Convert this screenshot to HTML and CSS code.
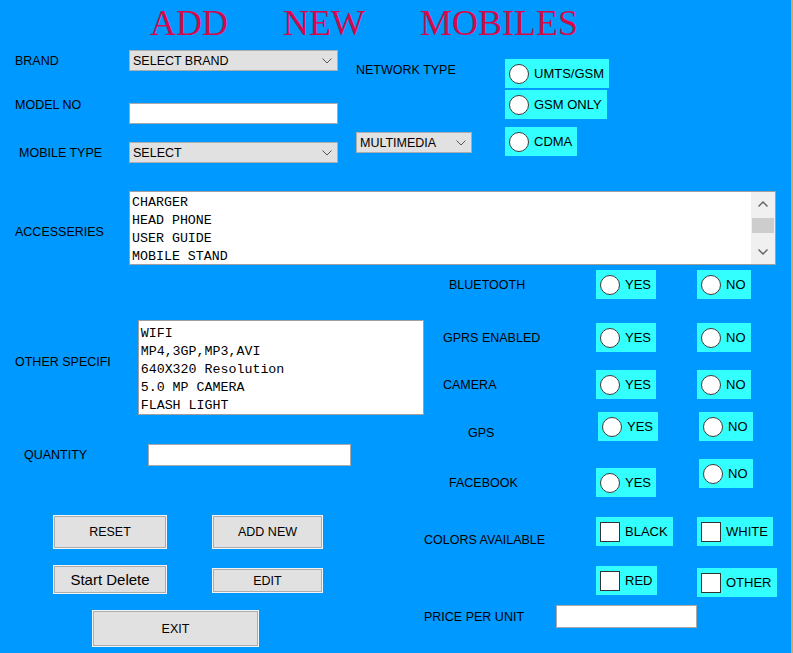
FILE: index.html
```html
<!DOCTYPE html>
<html lang="en">
<head>
  <meta charset="UTF-8" />
  <meta name="viewport" content="width=device-width, initial-scale=1.0" />
  <title>Add New Mobiles</title>
  <link rel="stylesheet" href="styles.css">
</head>
<body>

  <div class="form">
    <h1 class="title"><span>ADD</span><span>NEW</span><span>MOBILES</span></h1>

    <div class="top">
      <div class="fields">
        <div class="row">
          <span class="lbl">BRAND</span>
          <div class="combo combo-wide">SELECT BRAND
            <svg class="chev" width="10" height="6" viewBox="0 0 10 6"><polyline points="0.5,0.5 5,5 9.5,0.5" /></svg>
          </div>
        </div>
        <div class="row row-model">
          <span class="lbl">MODEL NO</span>
          <div class="textbox model-box"></div>
        </div>
        <div class="row row-type">
          <span class="lbl">MOBILE TYPE</span>
          <div class="combo combo-wide">SELECT
            <svg class="chev" width="10" height="6" viewBox="0 0 10 6"><polyline points="0.5,0.5 5,5 9.5,0.5" /></svg>
          </div>
        </div>
      </div>

      <div class="network">
        <span class="lbl net-lbl">NETWORK TYPE</span>
        <div class="combo combo-small">MULTIMEDIA
          <svg class="chev" width="10" height="6" viewBox="0 0 10 6"><polyline points="0.5,0.5 5,5 9.5,0.5" /></svg>
        </div>
      </div>

      <div class="nettypes">
        <label class="opt net-1"><span class="radio"></span>UMTS/GSM</label>
        <label class="opt net-2"><span class="radio"></span>GSM ONLY</label>
        <label class="opt net-3"><span class="radio"></span>CDMA</label>
      </div>
    </div>

    <div class="acc">
      <span class="lbl acc-lbl">ACCESSERIES</span>
      <div class="listbox">
        <div class="items">
          <div>CHARGER</div>
          <div>HEAD PHONE</div>
          <div>USER GUIDE</div>
          <div>MOBILE STAND</div>
        </div>
        <div class="scroll">
          <div class="sb-arrow">
            <svg width="10" height="6" viewBox="0 0 10 6"><polyline points="0.5,5.5 5,1 9.5,5.5" /></svg>
          </div>
          <div class="sb-thumb"></div>
          <div class="sb-space"></div>
          <div class="sb-arrow">
            <svg width="10" height="6" viewBox="0 0 10 6"><polyline points="0.5,0.5 5,5 9.5,0.5" /></svg>
          </div>
        </div>
      </div>
    </div>

    <div class="lower">
      <div class="left">
        <div class="spec-row">
          <span class="lbl spec-lbl">OTHER SPECIFI</span>
          <div class="specs">
            <div>WIFI</div>
            <div>MP4,3GP,MP3,AVI</div>
            <div>640X320 Resolution</div>
            <div>5.0 MP CAMERA</div>
            <div>FLASH LIGHT</div>
          </div>
        </div>

        <div class="qty-row">
          <span class="lbl qty-lbl">QUANTITY</span>
          <div class="textbox qty-box"></div>
        </div>

        <div class="btn-row btn-row-1">
          <button class="btn btn-reset">RESET</button>
          <button class="btn btn-add">ADD NEW</button>
        </div>
        <div class="btn-row btn-row-2">
          <button class="btn btn-delete">Start Delete</button>
          <button class="btn btn-edit">EDIT</button>
        </div>
        <div class="btn-row btn-row-3">
          <button class="btn btn-exit">EXIT</button>
        </div>
      </div>

      <div class="right">
        <div class="yn yn-bluetooth">
          <span class="lbl">BLUETOOTH</span>
          <label class="opt"><span class="radio"></span>YES</label>
          <label class="opt"><span class="radio"></span>NO</label>
        </div>
        <div class="yn yn-gprs">
          <span class="lbl">GPRS ENABLED</span>
          <label class="opt"><span class="radio"></span>YES</label>
          <label class="opt"><span class="radio"></span>NO</label>
        </div>
        <div class="yn yn-camera">
          <span class="lbl">CAMERA</span>
          <label class="opt"><span class="radio"></span>YES</label>
          <label class="opt"><span class="radio"></span>NO</label>
        </div>
        <div class="yn yn-gps">
          <span class="lbl">GPS</span>
          <label class="opt"><span class="radio"></span>YES</label>
          <label class="opt"><span class="radio"></span>NO</label>
        </div>
        <div class="yn yn-facebook">
          <span class="lbl">FACEBOOK</span>
          <label class="opt fb-yes"><span class="radio"></span>YES</label>
          <label class="opt fb-no"><span class="radio"></span>NO</label>
        </div>

        <div class="yn colors-1">
          <span class="lbl">COLORS AVAILABLE</span>
          <label class="opt"><span class="check"></span>BLACK</label>
          <label class="opt"><span class="check"></span>WHITE</label>
        </div>
        <div class="yn colors-2">
          <span></span>
          <label class="opt"><span class="check"></span>RED</label>
          <label class="opt opt-other"><span class="check"></span>OTHER</label>
        </div>

        <div class="price-row">
          <span class="lbl">PRICE PER UNIT</span>
          <div class="textbox price-box"></div>
        </div>
      </div>
    </div>
  </div>

</body>
</html>
```

FILE: styles.css
```css
body {
  margin: 0;
  font-family: "Liberation Sans", Arial, sans-serif;
  font-size: 12.5px;
  color: #000;
}
.form {
  width: 791px;
  height: 653px;
  background: #0099ff;
  border-right: 2px solid #eba046;
  overflow: hidden;
}
.title {
  display: flex;
  gap: 55px;
  height: 50px;
  box-sizing: border-box;
  margin: 0;
  padding: 3px 0 0 150px;
  font-family: "Liberation Serif", "Times New Roman", serif;
  font-size: 36px;
  font-weight: normal;
  line-height: 40px;
  color: #d6084c;
}
.lbl {
  line-height: 16px;
  white-space: nowrap;
}

/* top block */
.top {
  display: flex;
  height: 113px;
}
.fields {
  width: 338px;
}
.row {
  display: flex;
  align-items: center;
}
.fields .lbl {
  width: 129px;
  padding-left: 15px;
  box-sizing: border-box;
}
.row-model {
  margin-top: 26px;
  align-items: flex-start;
}
.model-box {
  margin-top: 6px;
}
.row-type {
  margin-top: 18px;
}
.fields .row-type .lbl {
  padding-left: 19px;
}
.combo {
  display: flex;
  align-items: center;
  justify-content: space-between;
  height: 21px;
  box-sizing: border-box;
  padding: 0 5px 0 3px;
  background: #e1e1e1;
  border: 1px solid #adadad;
  white-space: nowrap;
}
.combo-wide {
  width: 209px;
}
.combo-small {
  width: 116px;
  margin-top: 54px;
}
.chev polyline,
.sb-arrow polyline {
  fill: none;
  stroke: #555;
  stroke-width: 1;
}
.textbox {
  height: 21px;
  box-sizing: border-box;
  background: #fff;
  border: 1px solid #a9a9a9;
}
.model-box {
  width: 209px;
}
.network {
  margin-left: 18px;
  width: 116px;
}
.net-lbl {
  display: block;
  margin-top: 12px;
}
.nettypes {
  margin-left: 33px;
}
.net-1 {
  margin-top: 9px;
}
.net-2 {
  margin-top: 2px;
}
.net-3 {
  margin-top: 8px;
}

/* option boxes */
.opt {
  display: flex;
  align-items: center;
  gap: 5px;
  width: fit-content;
  height: 29px;
  box-sizing: border-box;
  padding: 0 5px 0 4px;
  background: #33ffff;
  font-size: 13px;
  white-space: nowrap;
}
.radio {
  width: 20px;
  height: 20px;
  box-sizing: border-box;
  border: 1px solid #3c3c3c;
  border-radius: 50%;
  background: #fff;
}
.check {
  width: 20px;
  height: 20px;
  box-sizing: border-box;
  border: 1px solid #333;
  background: #fff;
}

/* accessories */
.acc {
  display: flex;
  align-items: flex-start;
  margin-top: 28px;
}
.acc-lbl {
  width: 129px;
  padding-left: 15px;
  box-sizing: border-box;
  margin-top: 33px;
}
.listbox {
  display: flex;
  width: 647px;
  height: 74px;
  box-sizing: border-box;
  background: #fff;
  border: 1px solid #a0a0a0;
}
.items,
.specs {
  font-family: "Liberation Mono", "Courier New", monospace;
  font-size: 13.3px;
  line-height: 18px;
  white-space: nowrap;
}
.items {
  flex: 1;
  padding: 2px 0 0 2px;
  overflow: hidden;
}
.scroll {
  display: flex;
  flex-direction: column;
  width: 24px;
  background: #f0f0f0;
}
.sb-arrow {
  display: flex;
  align-items: center;
  justify-content: center;
  height: 24px;
}
.sb-arrow polyline {
  stroke: #606060;
  stroke-width: 1.4;
}
.sb-thumb {
  height: 15px;
  margin: 2px 1px 0;
  background: #cdcdcd;
}
.sb-space {
  flex: 1;
}

/* lower part */
.lower {
  display: flex;
}
.left {
  width: 424px;
}
.spec-row {
  display: flex;
  align-items: flex-start;
  margin-top: 55px;
}
.spec-lbl {
  width: 138px;
  padding-left: 15px;
  box-sizing: border-box;
  margin-top: 34px;
}
.specs {
  width: 287px;
  height: 95px;
  box-sizing: border-box;
  padding: 4px 0 0 2px;
  background: #fff;
  border: 1px solid #a0a0a0;
  overflow: hidden;
}
.qty-row {
  display: flex;
  align-items: center;
  margin-top: 29px;
}
.qty-lbl {
  width: 148px;
  padding-left: 24px;
  box-sizing: border-box;
}
.qty-box {
  width: 203px;
  height: 22px;
}
.btn-row {
  display: flex;
  align-items: flex-start;
  gap: 45px;
  padding-left: 53px;
}
.btn-row-1 {
  margin-top: 49px;
}
.btn-row-2,
.btn-row-3 {
  margin-top: 16px;
}
.btn-row-3 {
  padding-left: 92px;
}
.btn {
  padding: 0;
  font-family: "Liberation Sans", Arial, sans-serif;
  font-size: 12.5px;
  color: #000;
  background: #e1e1e1;
  border: 1px solid #f4f4f4;
  box-shadow: inset 0 0 0 1px #adadad;
}
.btn-reset,
.btn-delete {
  width: 114px;
}
.btn-add,
.btn-edit {
  width: 111px;
}
.btn-reset,
.btn-add {
  height: 34px;
}
.btn-delete {
  height: 29px;
  font-size: 15px;
}
.btn-edit {
  height: 25px;
  margin-top: 3px;
}
.btn-exit {
  width: 167px;
  height: 37px;
}

/* right side options */
.yn {
  display: grid;
  grid-template-columns: 172px 101px auto;
  align-items: center;
}
.yn-bluetooth {
  margin-top: 5px;
}
.yn-bluetooth .lbl,
.yn-facebook .lbl {
  padding-left: 25px;
}
.yn-gprs {
  margin-top: 24px;
}
.yn-gprs .lbl,
.yn-camera .lbl {
  padding-left: 19px;
}
.yn-camera {
  margin-top: 18px;
}
.yn-gps {
  margin-top: 13px;
  align-items: start;
}
.yn-gps .lbl {
  padding-left: 44px;
  margin-top: 13px;
}
.yn-gps .opt {
  margin-left: 2px;
}
.yn-facebook {
  margin-top: 18px;
  align-items: start;
}
.yn-facebook .lbl {
  margin-top: 16px;
}
.fb-yes {
  margin-top: 9px;
}
.fb-no {
  margin-left: 2px;
}
.colors-1 {
  margin-top: 20px;
  align-items: start;
}
.colors-1 .lbl {
  margin-top: 15px;
}
.colors-2 {
  margin-top: 18px;
  align-items: start;
}
.opt-other {
  margin-top: 2px;
}
.price-row {
  display: flex;
  align-items: center;
  margin-top: 8px;
}
.price-row .lbl {
  width: 132px;
}
.price-box {
  width: 141px;
  height: 23px;
}
```
